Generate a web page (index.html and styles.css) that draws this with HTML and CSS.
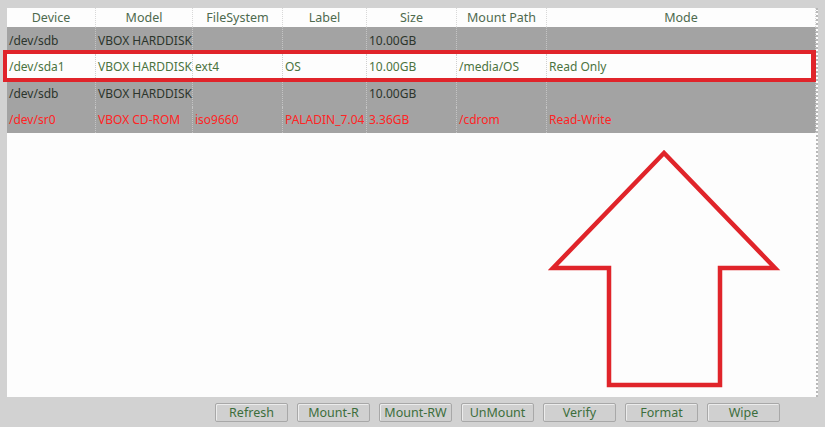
FILE: index.html
```html
<!DOCTYPE html>
<html>
<head>
<meta charset="utf-8">
<link rel="stylesheet" href="styles.css">
</head>
<body>
<div class="panel">
  <div class="table">
    <div class="row head">
      <div class="cell">Device</div><div class="cell">Model</div><div class="cell">FileSystem</div><div class="cell">Label</div><div class="cell">Size</div><div class="cell">Mount Path</div><div class="cell">Mode</div>
    </div>
    <div class="row gray">
      <div class="cell">/dev/sdb</div><div class="cell">VBOX HARDDISK</div><div class="cell"></div><div class="cell"></div><div class="cell">10.00GB</div><div class="cell"></div><div class="cell"></div>
    </div>
    <div class="row sel">
      <div class="cell">/dev/sda1</div><div class="cell">VBOX HARDDISK</div><div class="cell">ext4</div><div class="cell">OS</div><div class="cell">10.00GB</div><div class="cell">/media/OS</div><div class="cell">Read Only</div>
    </div>
    <div class="row gray">
      <div class="cell">/dev/sdb</div><div class="cell">VBOX HARDDISK</div><div class="cell"></div><div class="cell"></div><div class="cell">10.00GB</div><div class="cell"></div><div class="cell"></div>
    </div>
    <div class="row gray red">
      <div class="cell">/dev/sr0</div><div class="cell">VBOX CD-ROM</div><div class="cell">iso9660</div><div class="cell">PALADIN_7.04</div><div class="cell">3.36GB</div><div class="cell">/cdrom</div><div class="cell">Read-Write</div>
    </div>
  </div>
  <svg class="arrow" width="240" height="250" viewBox="0 0 240 250">
    <polygon points="116,5 5,120 61,120 61,237 172,237 172,120 227,120" fill="none" stroke="#e0242a" stroke-width="4.5" stroke-linejoin="miter"/>
  </svg>
</div>
<div class="buttons">
  <button class="btn">Refresh</button>
  <button class="btn">Mount-R</button>
  <button class="btn">Mount-RW</button>
  <button class="btn">UnMount</button>
  <button class="btn">Verify</button>
  <button class="btn">Format</button>
  <button class="btn">Wipe</button>
</div>
</body>
</html>
```

FILE: styles.css
```css
html, body {
  margin: 0;
  padding: 0;
}
body {
  width: 825px;
  height: 427px;
  background: #d2d2d2;
  font-family: "Noto Sans", "DejaVu Sans", sans-serif;
  font-size: 12px;
  overflow: hidden;
  display: flex;
  flex-direction: column;
}
.panel {
  position: relative;
  margin: 8px 7px 0 7px;
  height: 389px;
  background: #fdfdfd;
  border-right: 2px dotted #b8b8b8;
  box-sizing: border-box;
}
.table {
  display: flex;
  flex-direction: column;
}
.row {
  display: grid;
  grid-template-columns: 89px 97px 90px 84px 90px 90px 1fr;
  height: 26.5px;
  align-items: center;
}
.cell {
  height: 100%;
  display: flex;
  align-items: center;
  padding-left: 2px;
  white-space: nowrap;
  overflow: visible;
  border-right: 1px dotted #cfcfcf;
  box-sizing: border-box;
}
.cell:last-child {
  border-right: none;
}
.head {
  height: 19px;
  color: #4e6a4e;
  background: #fdfdfd;
}
.head .cell {
  justify-content: center;
  padding-left: 0;
  font-size: 12.5px;
  border-right: 1px dotted #d8d8d8;
}
.gray {
  background: #a3a3a3;
  color: #2c352c;
}
.gray .cell {
  border-right: 1px dotted #c4c4c4;
}
.sel {
  position: relative;
  background: #fdfdfd;
  color: #4b7340;
}
.sel::after {
  content: "";
  position: absolute;
  left: -4px;
  right: 0;
  top: -4px;
  bottom: -2px;
  border: 4px solid #e0242a;
  border-right-width: 5px;
}
.red {
  color: #ff2424;
}
.arrow {
  position: absolute;
  left: 541px;
  top: 140px;
}
.buttons {
  display: flex;
  gap: 9px;
  padding: 6px 0 0 215px;
}
.btn {
  width: 73px;
  height: 19px;
  padding: 0;
  background: #d0d0d0;
  border: 1px solid #a8a8a8;
  border-radius: 2px;
  box-shadow: inset 1px 1px 0 #ececec;
  font-family: "Noto Sans", "DejaVu Sans", sans-serif;
  font-size: 12.5px;
  color: #3c6e3c;
  line-height: 16px;
}
```
